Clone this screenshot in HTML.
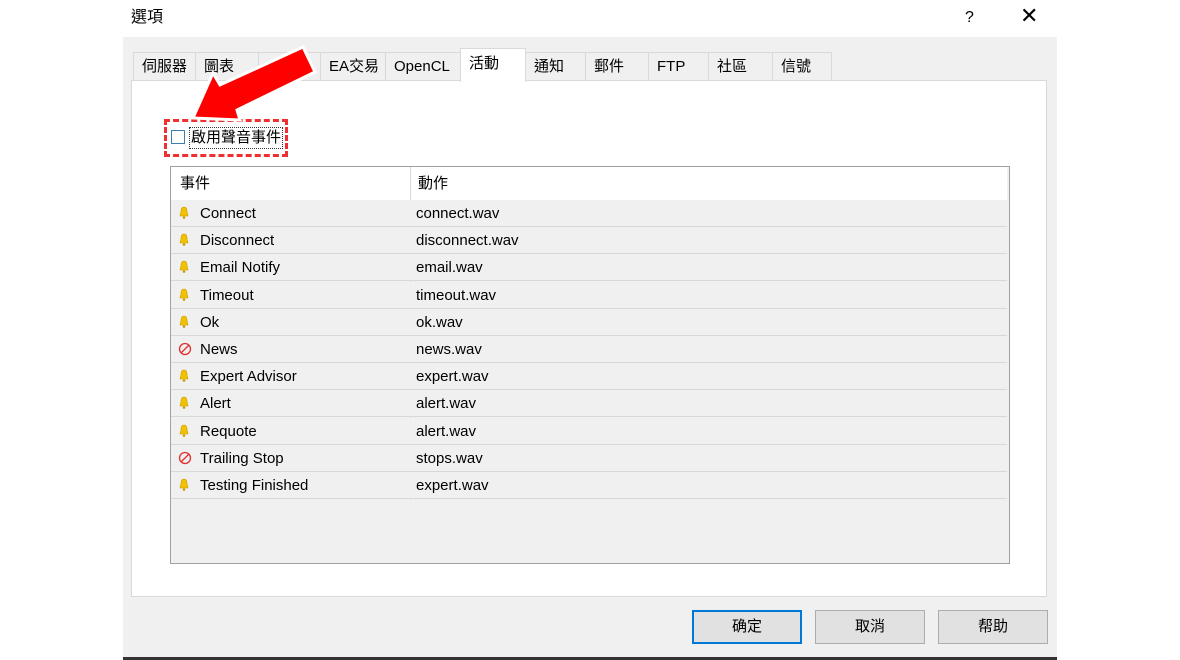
<!DOCTYPE html><html><head><style>
body{margin:0;width:1180px;height:660px;background:#fff;position:relative;overflow:hidden;font-family:"Liberation Sans","Noto Sans CJK TC",sans-serif;font-size:15px;color:#000}
.a{position:absolute;line-height:20px}
.tab{position:absolute;top:52px;height:28px;background:#f0f0f0;border:1px solid #d9d9d9;border-bottom:none;box-sizing:border-box;padding:4px 0 0 8px;font-size:15px;line-height:20px}
.row{position:absolute;left:171px;width:836px;height:26px;border-bottom:1px solid #d8d8d8;background:#f0f0f0;line-height:20px}
.row span{position:absolute;top:4px}
.bell{position:absolute;left:8px;top:6px;width:10px;height:13px}
.btn{position:absolute;top:610px;width:110px;height:34px;background:#e1e1e1;border:1px solid #adadad;box-sizing:border-box;text-align:center;line-height:32px;font-size:15px}
</style></head><body>
<div class="a" style="left:131px;top:8px;font-size:16px">選項</div>
<div class="a" style="left:965px;top:8px;font-size:16px">?</div>
<div class="a" style="left:1020px;top:6px;font-size:22px">✕</div>
<div class="a" style="left:123px;top:37px;width:934px;height:623px;background:#f0f0f0"></div>
<div class="a" style="left:123px;top:657px;width:934px;height:3px;background:#333"></div>
<div class="a" style="left:131px;top:80px;width:914px;height:515px;background:#fff;border:1px solid #d9d9d9"></div>
<div class="tab" style="left:133px;width:63px">伺服器</div>
<div class="tab" style="left:195px;width:64px">圖表</div>
<div class="tab" style="left:258px;width:63px"></div>
<div class="tab" style="left:320px;width:66px">EA交易</div>
<div class="tab" style="left:385px;width:76px">OpenCL</div>
<div class="tab" style="left:460px;top:48px;height:34px;width:66px;background:#fff;padding-top:5px">活動</div>
<div class="tab" style="left:525px;width:61px">通知</div>
<div class="tab" style="left:585px;width:64px">郵件</div>
<div class="tab" style="left:648px;width:61px">FTP</div>
<div class="tab" style="left:708px;width:65px">社區</div>
<div class="tab" style="left:772px;width:60px">信號</div>
<div class="a" style="left:164px;top:119px;width:124px;height:38px;border:3px dashed #f03030;box-sizing:border-box"></div>
<div class="a" style="left:171px;top:130px;width:14px;height:14px;border:1px solid #3c7fb1;box-sizing:border-box"></div>
<div class="a" style="left:189px;top:127px;border:1px dotted #333;padding:0 1px;font-size:15px;line-height:20px">啟用聲音事件</div>
<svg class="a" style="left:0;top:0" width="400" height="200"><polygon points="193,118 213,73 220,85 303,47 315,72 237,110 240,120" fill="#f00" stroke="#fff" stroke-width="3" stroke-linejoin="miter"/></svg>
<div class="a" style="left:170px;top:166px;width:840px;height:398px;border:1px solid #a0a0a0;box-sizing:border-box;background:#f0f0f0"></div>
<div class="a" style="left:171px;top:167px;width:836px;height:33px;background:#fff"></div>
<div class="a" style="left:180px;top:174px">事件</div>
<div class="a" style="left:418px;top:174px">動作</div>
<div class="a" style="left:410px;top:167px;width:1px;height:333px;background:#d8d8d8"></div>
<div id="rows"></div>
<script>
var d=[["Connect","connect.wav",0],["Disconnect","disconnect.wav",0],["Email Notify","email.wav",0],["Timeout","timeout.wav",0],["Ok","ok.wav",0],["News","news.wav",1],["Expert Advisor","expert.wav",0],["Alert","alert.wav",0],["Requote","alert.wav",0],["Trailing Stop","stops.wav",1],["Testing Finished","expert.wav",0]];
var h="";d.forEach(function(r,i){var ic=r[2]?'<svg class="bell" style="left:7px;top:6px;width:14px;height:14px" viewBox="0 0 14 14"><circle cx="7" cy="7" r="5.5" fill="none" stroke="#e03030" stroke-width="1.3"/><line x1="3" y1="11" x2="11" y2="3" stroke="#e03030" stroke-width="1.3"/></svg>':'<svg class="bell" viewBox="0 0 10 13"><path d="M5 1C2.5 1 2 3.5 2 6L1 10H9L8 6C8 3.5 7.5 1 5 1Z" fill="#f2c200" stroke="#c89a00" stroke-width=".6"/><circle cx="5" cy="11.5" r="1.3" fill="#c89a00"/></svg>';
h+='<div class="row" style="top:'+(200+i*27.2)+'px">'+ic+'<span style="left:29px">'+r[0]+'</span><span style="left:245px">'+r[1]+'</span></div>'});
document.getElementById("rows").innerHTML=h;
</script>
<div class="btn" style="left:692px;border:2px solid #0078d7;line-height:30px">确定</div>
<div class="btn" style="left:815px">取消</div>
<div class="btn" style="left:938px">帮助</div>
</body></html>
